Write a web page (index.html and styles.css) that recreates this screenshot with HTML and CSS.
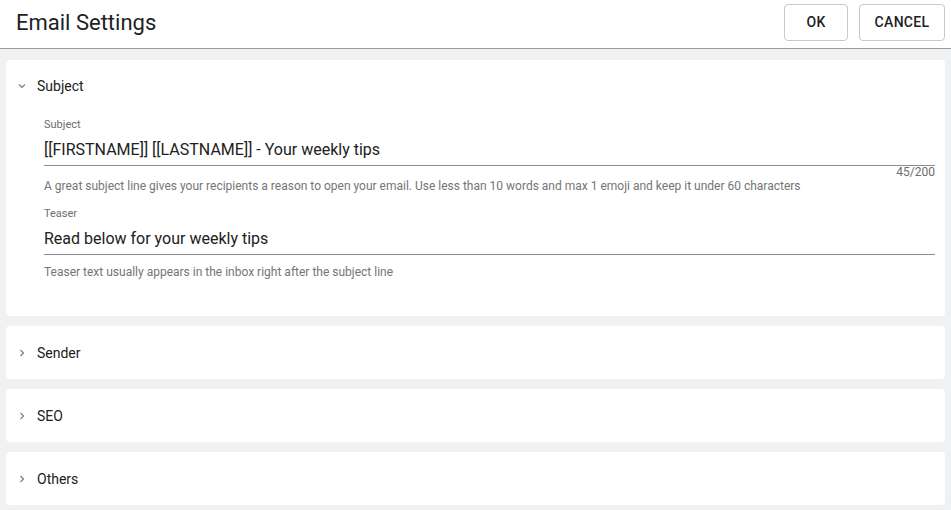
FILE: index.html
```html
<!DOCTYPE html>
<html lang="en">
<head>
    <meta charset="UTF-8">
    <meta name="viewport" content="width=device-width, initial-scale=1.0">
    <title>Email Settings</title>
    <link rel="stylesheet" href="styles.css">
</head>
<body>
    <header class="topbar">
        <h1 class="title">Email Settings</h1>
        <div class="actions">
            <button type="button" class="btn btn-ok">OK</button>
            <button type="button" class="btn btn-cancel">Cancel</button>
        </div>
    </header>

    <main class="panels">
        <section class="panel open">
            <div class="panel-head">
                <svg class="chev" width="8" height="8" viewBox="0 0 8 8"><path d="M1 2.5 L4 5.5 L7 2.5" fill="none" stroke="#7a7f85" stroke-width="1.2"/></svg>
                <span>Subject</span>
            </div>
            <div class="panel-body">
                <div class="field">
                    <label class="field-label" for="subject">Subject</label>
                    <input class="field-input" id="subject" type="text" value="[[FIRSTNAME]] [[LASTNAME]] - Your weekly tips">
                    <div class="counter">45/200</div>
                    <div class="hint hint-tight">A great subject line gives your recipients a reason to open your email. Use less than 10 words and max 1 emoji and keep it under 60 characters</div>
                </div>
                <div class="field">
                    <label class="field-label" for="teaser">Teaser</label>
                    <input class="field-input" id="teaser" type="text" value="Read below for your weekly tips">
                    <div class="hint">Teaser text usually appears in the inbox right after the subject line</div>
                </div>
            </div>
        </section>

        <section class="panel">
            <div class="panel-head">
                <svg class="chev" width="8" height="8" viewBox="0 0 8 8"><path d="M2.5 1 L5.5 4 L2.5 7" fill="none" stroke="#7a7f85" stroke-width="1.2"/></svg>
                <span>Sender</span>
            </div>
        </section>

        <section class="panel">
            <div class="panel-head">
                <svg class="chev" width="8" height="8" viewBox="0 0 8 8"><path d="M2.5 1 L5.5 4 L2.5 7" fill="none" stroke="#7a7f85" stroke-width="1.2"/></svg>
                <span>SEO</span>
            </div>
        </section>

        <section class="panel">
            <div class="panel-head">
                <svg class="chev" width="8" height="8" viewBox="0 0 8 8"><path d="M2.5 1 L5.5 4 L2.5 7" fill="none" stroke="#7a7f85" stroke-width="1.2"/></svg>
                <span>Others</span>
            </div>
        </section>
    </main>
</body>
</html>
```

FILE: styles.css
```css
body { margin: 0; font-family: Roboto, "Liberation Sans", sans-serif; background: #f0f1f3; color: #212121; }

.topbar { box-sizing: border-box; height: 49px; background: #fff; border-bottom: 1px solid #9a9a9a; display: flex; align-items: center; justify-content: space-between; padding: 0 6px 4px 16px; }
.title { margin: 0; font-size: 22px; font-weight: 400; color: #222; }
.actions { display: flex; gap: 11px; }
.btn { height: 37px; background: #fff; border: 1px solid #c9c9c9; border-radius: 4px; font-family: inherit; font-size: 14px; font-weight: 500; text-transform: uppercase; letter-spacing: 0.3px; color: #1e1e1e; cursor: pointer; }
.btn-ok { width: 64px; }
.btn-cancel { width: 86px; }

.panels { display: flex; flex-direction: column; gap: 10px; padding: 11px 6px 6px; }
.panel { background: #fff; border-radius: 4px; }
.panel-head { height: 53px; display: flex; align-items: center; padding-left: 12px; font-size: 14px; color: #212121; }
.panel.open .panel-head { height: 52px; }
.chev { margin-right: 11px; }

.panel-body { padding: 6px 10px 37px 38px; }
.field { display: flex; flex-direction: column; }
.field + .field { margin-top: 14px; }
.field-label { font-size: 11px; line-height: 14px; color: #6d6d6d; }
.field-input { box-sizing: border-box; margin-top: 5px; border: none; border-bottom: 1px solid #8c8c8c; padding: 0 0 4px; font-family: inherit; font-size: 16px; line-height: 24px; height: 29px; color: #212121; outline: none; background: transparent; }
.counter { text-align: right; font-size: 12px; line-height: 12px; color: #6d6d6d; }
.hint { margin-top: 10px; font-size: 12px; line-height: 14px; color: #757575; }
.hint-tight { margin-top: 1px; }
```
